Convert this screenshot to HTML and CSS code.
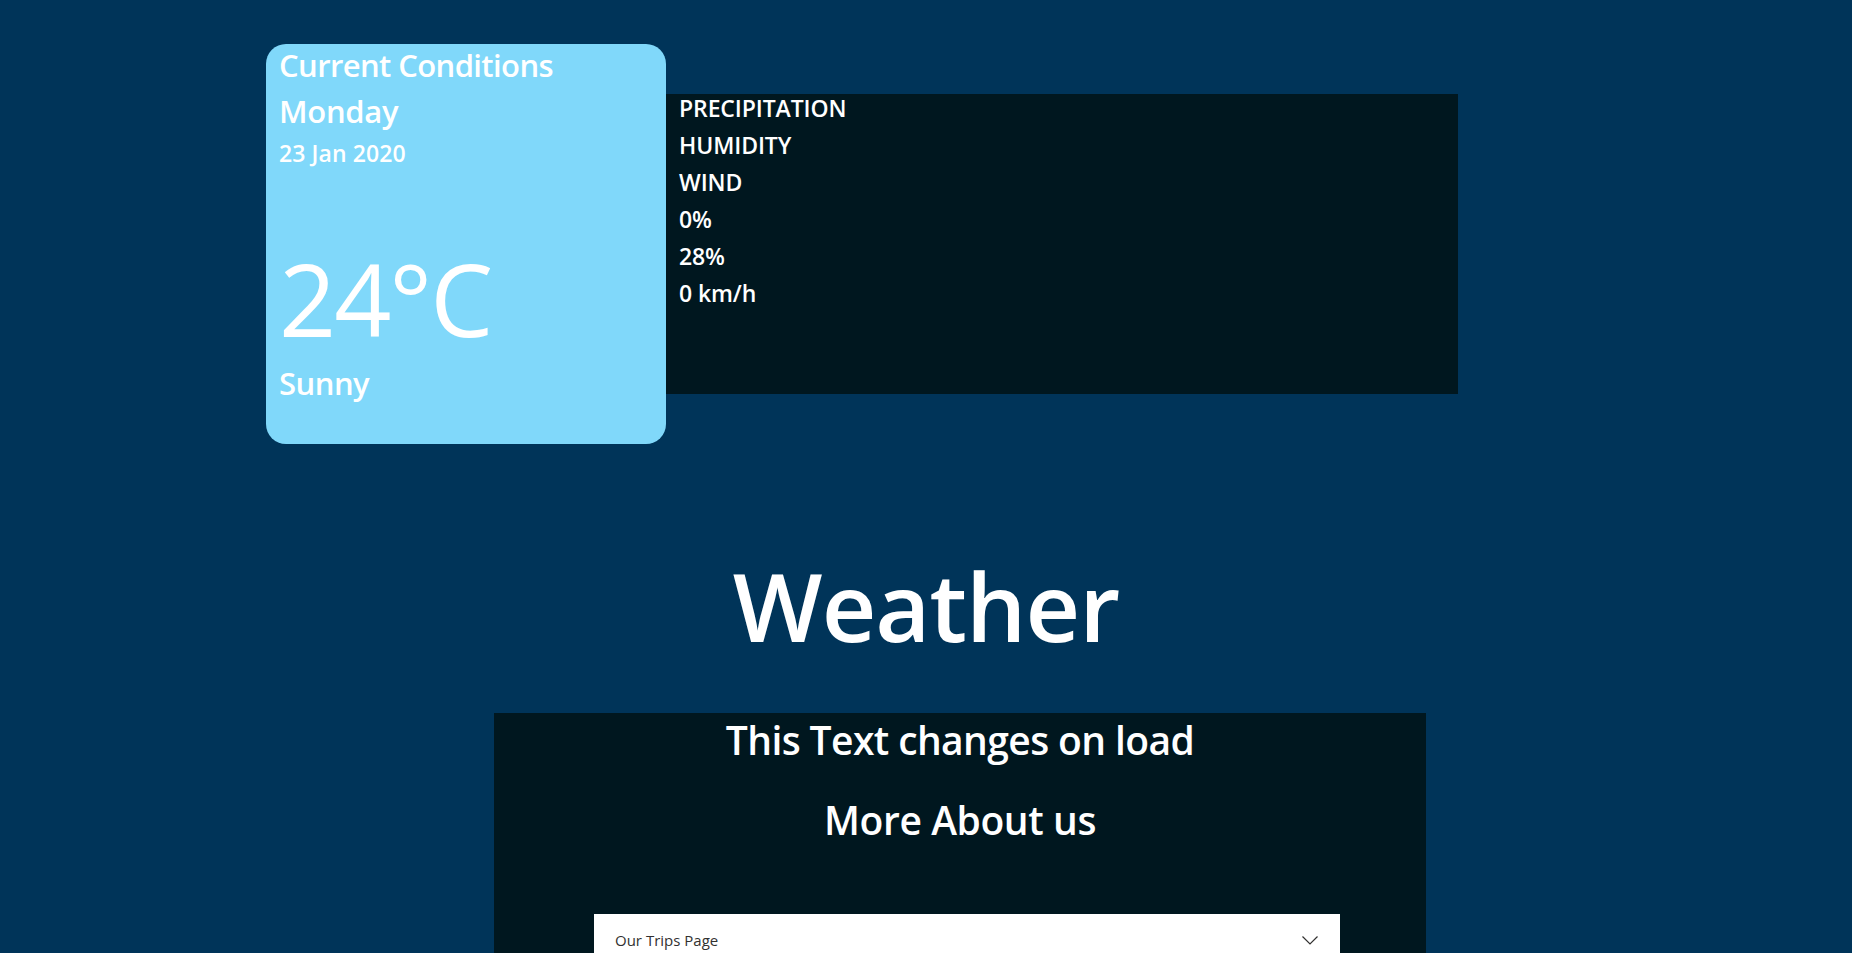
FILE: index.html
```html
<!DOCTYPE html>
<html lang="en">
<head>
<meta charset="utf-8">
<title>Weather</title>
<link rel="stylesheet" href="styles.css">
</head>
<body>
<main class="page">
  <section class="top-row">
    <div class="card">
      <h2 class="card-title">Current Conditions</h2>
      <h2 class="card-day">Monday</h2>
      <h3 class="card-date">23 Jan 2020</h3>
      <p class="card-temp">24°C</p>
      <h2 class="card-desc">Sunny</h2>
    </div>
    <div class="details">
      <p class="detail">PRECIPITATION</p>
      <p class="detail">HUMIDITY</p>
      <p class="detail">WIND</p>
      <p class="detail">0%</p>
      <p class="detail">28%</p>
      <p class="detail">0 km/h</p>
    </div>
  </section>

  <h1 class="title">Weather</h1>

  <section class="about">
    <h2 class="about-heading">This Text changes on load</h2>
    <h2 class="about-heading about-more">More About us</h2>
    <div class="select">
      <span class="select-label">Our Trips Page</span>
      <svg class="chevron" width="16" height="9" viewBox="0 0 16 9" aria-hidden="true">
        <path d="M0.5 0.5 L8 8 L15.5 0.5" fill="none" stroke="#323130" stroke-width="1.2"/>
      </svg>
    </div>
  </section>
</main>
</body>
</html>
```

FILE: styles.css
```css
* {
  box-sizing: border-box;
}

html, body {
  margin: 0;
  padding: 0;
}

body {
  background: #003459;
  color: #ffffff;
  font-family: "Open Sans", "Noto Sans", "Liberation Sans", sans-serif;
}

h1, h2, h3, p {
  margin: 0;
}

.page {
  display: flex;
  flex-direction: column;
}

.top-row {
  display: flex;
  align-items: center;
  padding-top: 44px;
  padding-left: 266px;
}

.card {
  width: 400px;
  height: 400px;
  flex: none;
  background: #80d8fa;
  border-radius: 20px;
  padding-top: 2px;
  padding-left: 13px;
  display: flex;
  flex-direction: column;
}

.card-title,
.card-day {
  font-size: 31px;
  line-height: 38px;
  font-weight: 600;
  letter-spacing: -0.6px;
}

.card-day {
  margin-top: 8px;
  letter-spacing: -0.3px;
}

.card-date {
  margin-top: 7px;
  font-size: 23px;
  line-height: 32px;
  font-weight: 600;
  letter-spacing: 0.1px;
}

.card-temp {
  margin-top: 64px;
  font-size: 100px;
  line-height: 130px;
  font-weight: 400;
  letter-spacing: -2px;
}

.card-desc {
  margin-top: 3px;
  font-size: 31px;
  line-height: 34px;
  font-weight: 600;
  letter-spacing: -0.5px;
}

.details {
  width: 792px;
  height: 300px;
  flex: none;
  background: #00171f;
  padding-left: 13px;
  display: flex;
  flex-direction: column;
  gap: 9px;
}

.detail {
  font-size: 23px;
  line-height: 28px;
  font-weight: 600;
  letter-spacing: -0.1px;
}

.title {
  margin-top: 101px;
  text-align: center;
  font-size: 95px;
  line-height: 120px;
  font-weight: 600;
  letter-spacing: -1px;
}

.about {
  margin-top: 48px;
  margin-left: 494px;
  width: 932px;
  background: #00171f;
  padding-top: 5px;
  padding-bottom: 120px;
  display: flex;
  flex-direction: column;
}

.about-heading {
  text-align: center;
  font-size: 39px;
  line-height: 44px;
  font-weight: 600;
  letter-spacing: -0.6px;
}

.about-more {
  margin-top: 36px;
  letter-spacing: -0.4px;
}

.select {
  margin-top: 72px;
  margin-left: 100px;
  width: 746px;
  height: 60px;
  background: #ffffff;
  display: flex;
  align-items: flex-start;
  justify-content: space-between;
  padding: 16px 22px 0 21px;
}

.select-label {
  color: #323130;
  font-size: 15px;
  line-height: 20px;
  font-weight: 400;
}

.chevron {
  display: block;
  margin-top: 6px;
}
```
